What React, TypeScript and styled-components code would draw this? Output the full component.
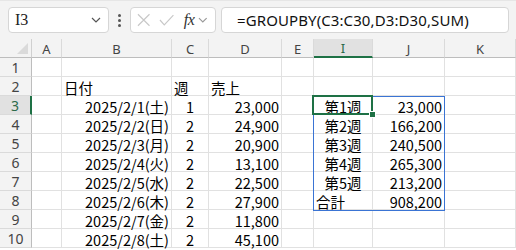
import React from "react";
import styled, { createGlobalStyle } from "styled-components";

const GlobalStyle = createGlobalStyle`
  html, body {
    margin: 0;
    padding: 0;
    background: #f3f3f3;
  }
  body {
    width: 516px;
    height: 250px;
    overflow: hidden;
  }
`;

const CELL_FONT = `"Noto Sans CJK JP", "Noto Sans", sans-serif`;
const UI_FONT = `"Noto Sans", "Noto Sans CJK JP", sans-serif`;
const GREEN = "#1e7145";
const GRID = "#e1e1e1";

const COLS = [
  { key: "", w: 32 },
  { key: "A", w: 30 },
  { key: "B", w: 110 },
  { key: "C", w: 37 },
  { key: "D", w: 73 },
  { key: "E", w: 32 },
  { key: "I", w: 59 },
  { key: "J", w: 72 },
  { key: "K", w: 71 },
];

type Align = "left" | "right" | "center";
type Cell = { v: string; a?: Align };

// values per row, keyed by column letter
const ROWS: Record<string, Cell>[] = [
  {},
  { B: { v: "日付", a: "left" }, C: { v: "週", a: "left" }, D: { v: "売上", a: "left" } },
  { B: { v: "2025/2/1(土)" }, C: { v: "1", a: "center" }, D: { v: "23,000" }, I: { v: "第1週", a: "center" }, J: { v: "23,000" } },
  { B: { v: "2025/2/2(日)" }, C: { v: "2", a: "center" }, D: { v: "24,900" }, I: { v: "第2週", a: "center" }, J: { v: "166,200" } },
  { B: { v: "2025/2/3(月)" }, C: { v: "2", a: "center" }, D: { v: "20,900" }, I: { v: "第3週", a: "center" }, J: { v: "240,500" } },
  { B: { v: "2025/2/4(火)" }, C: { v: "2", a: "center" }, D: { v: "13,100" }, I: { v: "第4週", a: "center" }, J: { v: "265,300" } },
  { B: { v: "2025/2/5(水)" }, C: { v: "2", a: "center" }, D: { v: "22,500" }, I: { v: "第5週", a: "center" }, J: { v: "213,200" } },
  { B: { v: "2025/2/6(木)" }, C: { v: "2", a: "center" }, D: { v: "27,900" }, I: { v: "合計", a: "left" }, J: { v: "908,200" } },
  { B: { v: "2025/2/7(金)" }, C: { v: "2", a: "center" }, D: { v: "11,800" } },
  { B: { v: "2025/2/8(土)" }, C: { v: "2", a: "center" }, D: { v: "45,100" } },
];

const Screen = styled.div`
  width: 516px;
  height: 250px;
  display: flex;
  flex-direction: column;
  background: #f3f3f3;
  overflow: hidden;
`;

const FormulaBar = styled.div`
  height: 39px;
  display: flex;
  align-items: flex-start;
  padding: 6px 7px 0 8px;
  box-sizing: border-box;
  border-top: 1px solid #e6e6e6;
`;

const Box = styled.div<{ $w?: number; $grow?: boolean }>`
  height: 26px;
  box-sizing: border-box;
  background: #fff;
  border: 1px solid #d6d6d6;
  border-radius: 4px;
  display: flex;
  align-items: center;
  ${(p) => (p.$w ? `width: ${p.$w}px;` : "")}
  ${(p) => (p.$grow ? "flex: 1;" : "")}
`;

const NameText = styled.span`
  flex: 1;
  padding-left: 6px;
  font-family: "Liberation Serif", "DejaVu Serif", serif;
  font-size: 16px;
  color: #222;
`;

const Dots = styled.div`
  width: 21px;
  height: 26px;
  display: flex;
  flex-direction: column;
  align-items: center;
  justify-content: center;
  gap: 2px;
  span {
    width: 3px;
    height: 3px;
    border-radius: 50%;
    background: #555;
  }
`;

const FxText = styled.span`
  font-family: "Liberation Serif", "DejaVu Serif", serif;
  font-style: italic;
  font-size: 16px;
  color: #333;
  margin-left: 9px;
  letter-spacing: -0.5px;
`;

const Gap = styled.div<{ $w: number }>`
  width: ${(p) => p.$w}px;
  flex: none;
`;

const FormulaText = styled.span`
  padding-left: 15px;
  font-family: ${UI_FONT};
  font-size: 15px;
  letter-spacing: 0.1px;
  color: #111;
  white-space: nowrap;
`;

const Sheet = styled.div`
  position: relative;
  flex: 1;
  display: grid;
  grid-template-columns: ${COLS.map((c) => c.w + "px").join(" ")};
  grid-auto-rows: 19px;
  background: #fff;
`;

const Corner = styled.div`
  background: #f3f3f3;
  border-right: 1px solid #d0d0d0;
  border-bottom: 1px solid #bdbdbd;
  position: relative;
  &::after {
    content: "";
    position: absolute;
    right: 3px;
    bottom: 3px;
    border-left: 11px solid transparent;
    border-bottom: 11px solid #dadada;
  }
`;

const ColHeader = styled.div<{ $active?: boolean }>`
  background: ${(p) => (p.$active ? "#e1e1e1" : "#f3f3f3")};
  border-right: 1px solid #dadada;
  border-bottom: ${(p) => (p.$active ? `2px solid ${GREEN}` : "1px solid #bdbdbd")};
  display: flex;
  align-items: center;
  justify-content: center;
  font-family: ${UI_FONT};
  font-size: 13px;
  color: ${(p) => (p.$active ? "#2c6a4a" : "#444")};
  box-sizing: border-box;
  padding-top: 1px;
`;

const RowHeader = styled.div<{ $active?: boolean }>`
  background: ${(p) => (p.$active ? "#e1e1e1" : "#f3f3f3")};
  border-right: ${(p) => (p.$active ? `2px solid ${GREEN}` : "1px solid #bdbdbd")};
  border-bottom: 1px solid #dadada;
  display: flex;
  align-items: center;
  justify-content: center;
  font-family: ${UI_FONT};
  font-size: 14px;
  color: ${(p) => (p.$active ? "#2c6a4a" : "#444")};
  box-sizing: border-box;
  padding-top: 1px;
`;

const GridCell = styled.div<{ $align: Align }>`
  border-right: 1px solid ${GRID};
  border-bottom: 1px solid ${GRID};
  display: flex;
  align-items: center;
  justify-content: ${(p) =>
    p.$align === "left" ? "flex-start" : p.$align === "center" ? "center" : "flex-end"};
  padding: 2px 2px 0 2px;
  font-family: ${CELL_FONT};
  font-size: 14.5px;
  color: #000;
  white-space: nowrap;
  box-sizing: border-box;
`;

const SpillRange = styled.div`
  position: absolute;
  left: 313px;
  top: 57px;
  width: 132px;
  height: 115px;
  border: 1px solid #3a74d4;
  box-sizing: border-box;
  pointer-events: none;
`;

const ActiveCell = styled.div`
  position: absolute;
  left: 312px;
  top: 56px;
  width: 61px;
  height: 20px;
  border: 2px solid ${GREEN};
  box-sizing: border-box;
  pointer-events: none;
  &::after {
    content: "";
    position: absolute;
    right: -5px;
    bottom: -5px;
    width: 5px;
    height: 5px;
    background: ${GREEN};
    border: 1px solid #fff;
  }
`;

const XIcon = () => (
  <svg width="14" height="14" viewBox="0 0 14 14" style={{ marginLeft: 6 }}>
    <path d="M1 1 L13 13 M13 1 L1 13" stroke="#c8c8c8" strokeWidth="1.2" fill="none" />
  </svg>
);

const CheckIcon = () => (
  <svg width="16" height="14" viewBox="0 0 16 14" style={{ marginLeft: 9 }}>
    <path d="M1 7 L5.5 12 L15 2" stroke="#c8c8c8" strokeWidth="1.2" fill="none" />
  </svg>
);

const Chevron = ({ color = "#555", ml = 0 }: { color?: string; ml?: number }) => (
  <svg width="10" height="6" viewBox="0 0 10 6" style={{ marginLeft: ml, marginRight: 7 }}>
    <path d="M1 1 L5 5 L9 1" stroke={color} strokeWidth="1.2" fill="none" />
  </svg>
);

export default function App() {
  return (
    <Screen>
      <GlobalStyle />
      <FormulaBar>
        <Box $w={101}>
          <NameText>I3</NameText>
          <Chevron />
        </Box>
        <Dots>
          <span />
          <span />
          <span />
        </Dots>
        <Box $w={86}>
          <XIcon />
          <CheckIcon />
          <FxText>fx</FxText>
          <Chevron color="#999" ml={4} />
        </Box>
        <Gap $w={5} />
        <Box $grow>
          <FormulaText>=GROUPBY(C3:C30,D3:D30,SUM)</FormulaText>
        </Box>
      </FormulaBar>
      <Sheet>
        <Corner />
        {COLS.slice(1).map((c) => (
          <ColHeader key={c.key} $active={c.key === "I"}>
            {c.key}
          </ColHeader>
        ))}
        {ROWS.map((row, i) => (
          <React.Fragment key={i}>
            <RowHeader $active={i === 2}>{i + 1}</RowHeader>
            {COLS.slice(1).map((c) => {
              const cell = row[c.key];
              return (
                <GridCell key={c.key} $align={cell?.a ?? "right"}>
                  {cell?.v}
                </GridCell>
              );
            })}
          </React.Fragment>
        ))}
        <SpillRange />
        <ActiveCell />
      </Sheet>
    </Screen>
  );
}
